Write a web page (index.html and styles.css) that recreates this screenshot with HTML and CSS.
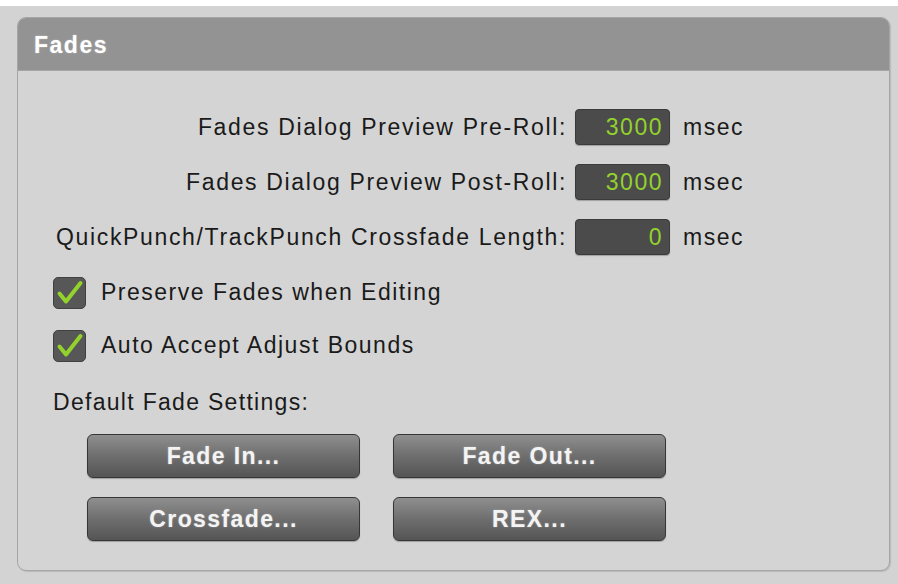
FILE: index.html
```html
<!DOCTYPE html>
<html lang="en">
<head>
<meta charset="UTF-8">
<meta name="viewport" content="width=device-width, initial-scale=1.0">
<title>Fades</title>
<link rel="stylesheet" href="styles.css">
</head>
<body>
<div class="window">
  <div class="panel">
    <div class="panel-title">Fades</div>
    <div class="panel-body">
      <div class="fields">
        <label class="field-label">Fades Dialog Preview Pre-Roll:</label>
        <div class="num-box">3000</div>
        <span class="unit">msec</span>

        <label class="field-label">Fades Dialog Preview Post-Roll:</label>
        <div class="num-box">3000</div>
        <span class="unit">msec</span>

        <label class="field-label">QuickPunch/TrackPunch Crossfade Length:</label>
        <div class="num-box">0</div>
        <span class="unit">msec</span>
      </div>

      <div class="check-row">
        <span class="check-box">
          <svg width="31" height="30" viewBox="0 0 31 30"><path d="M5.5 15.5 L12 23.5 L26.5 5" fill="none" stroke="#93d22c" stroke-width="4" stroke-linecap="round" stroke-linejoin="round"/></svg>
        </span>
        <span class="check-text">Preserve Fades when Editing</span>
      </div>
      <div class="check-row">
        <span class="check-box">
          <svg width="31" height="30" viewBox="0 0 31 30"><path d="M5.5 15.5 L12 23.5 L26.5 5" fill="none" stroke="#93d22c" stroke-width="4" stroke-linecap="round" stroke-linejoin="round"/></svg>
        </span>
        <span class="check-text">Auto Accept Adjust Bounds</span>
      </div>

      <div class="section-label">Default Fade Settings:</div>
      <div class="buttons">
        <button class="btn">Fade In...</button>
        <button class="btn">Fade Out...</button>
        <button class="btn">Crossfade...</button>
        <button class="btn">REX...</button>
      </div>
    </div>
  </div>
</div>
</body>
</html>
```

FILE: styles.css
```css
html {
  background-color: #fff;
}

body {
  margin: 0;
  padding: 0;
  font-family: "Liberation Sans", Arial, sans-serif;
  letter-spacing: 1.5px;
}

.window {
  margin-top: 6px;
  height: 567px;
  padding: 11px 8px 0 17px;
  background-color: #d3d3d3;
}

.panel {
  width: 871px;
  height: 552px;
  border: 1px solid #a6a6a6;
  border-radius: 9px;
  background-color: #d4d4d4;
  box-shadow: 1px 1px 1px rgba(0, 0, 0, 0.12);
  overflow: hidden;
}

.panel-title {
  height: 52px;
  line-height: 54px;
  padding-left: 16px;
  background-color: #939393;
  border-bottom: 1px solid #a4a4a4;
  color: #fff;
  font-size: 23px;
  font-weight: bold;
  letter-spacing: 1.5px;
  text-shadow: 0 0 2px rgba(255, 255, 255, 0.4);
}

.panel-body {
  padding: 38px 0 0 35px;
}

.fields {
  display: grid;
  grid-template-columns: 522px 95px auto;
  row-gap: 19px;
  align-items: center;
}

.field-label {
  text-align: right;
  padding-right: 8px;
  font-size: 23px;
  letter-spacing: 1.65px;
  color: #1a1a1a;
}

.num-box {
  height: 34px;
  line-height: 35px;
  padding-right: 6px;
  border: 1px solid #3b3b3b;
  border-radius: 4px;
  background-color: #4b4b4b;
  color: #93d22c;
  font-size: 23px;
  letter-spacing: 1.5px;
  text-align: right;
  box-shadow: 0 1px 1px rgba(0, 0, 0, 0.25);
}

.unit {
  padding-left: 13px;
  font-size: 23px;
  color: #1a1a1a;
}

.check-row {
  display: flex;
  align-items: center;
  gap: 15px;
  height: 31px;
  margin-top: 22px;
}

.check-row:first-of-type {
  margin-top: 21px;
}

.check-box {
  width: 31px;
  height: 30px;
  border: 1px solid #404040;
  border-radius: 5px;
  background-color: #575757;
  display: flex;
  align-items: center;
  justify-content: center;
}

.check-box svg {
  display: block;
}

.check-text {
  font-size: 23px;
  color: #1a1a1a;
}

.section-label {
  margin-top: 28px;
  height: 26px;
  line-height: 26px;
  font-size: 23px;
  letter-spacing: 1.3px;
  color: #1a1a1a;
}

.buttons {
  display: grid;
  grid-template-columns: 273px 273px;
  column-gap: 33px;
  row-gap: 19px;
  margin: 19px 0 0 34px;
}

.btn {
  height: 44px;
  padding: 0;
  border: 1px solid #363636;
  border-radius: 6px;
  background: linear-gradient(#8f8f8f, #6e6e6e 50%, #555 100%);
  color: #f4f4f4;
  font-family: "Liberation Sans", Arial, sans-serif;
  font-size: 23px;
  font-weight: bold;
  letter-spacing: 1.4px;
  text-shadow: 0 0 2px rgba(255, 255, 255, 0.35);
  box-shadow: 0 1px 1px rgba(0, 0, 0, 0.25);
}
```
